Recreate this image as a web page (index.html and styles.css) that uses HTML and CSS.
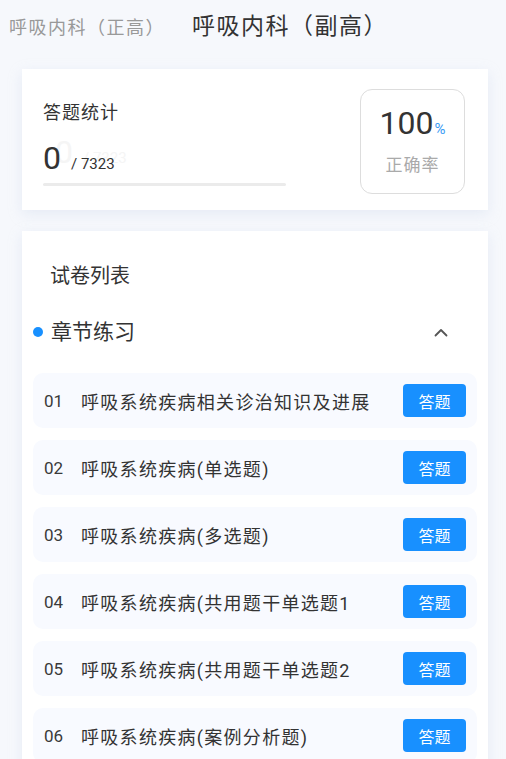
FILE: index.html
```html
<!DOCTYPE html>
<html lang="zh-CN">
<head>
    <meta charset="UTF-8">
    <meta name="viewport" content="width=device-width, initial-scale=1.0">
    <title>呼吸内科（副高）</title>
    <link rel="stylesheet" href="styles.css">
</head>
<body>
    <!-- Tabs -->
    <div class="tabs">
        <span class="tab">呼吸内科（正高）</span>
        <span class="tab tab-active">呼吸内科（副高）</span>
    </div>

    <!-- Stats card -->
    <div class="card stats-card">
        <div class="stats-left">
            <div class="stats-title">答题统计</div>
            <div class="stats-count">
                <span class="count-done">0</span>
                <span class="count-total">/ 7323</span>
            </div>
            <div class="progress"><div class="progress-fill" style="width: 0%"></div></div>
        </div>
        <div class="rate-box">
            <div class="rate-value">100<span class="rate-unit">%</span></div>
            <div class="rate-label">正确率</div>
        </div>
    </div>

    <!-- Paper list -->
    <div class="card list-card">
        <div class="list-title">试卷列表</div>
        <div class="group-head">
            <span class="group-dot"></span>
            <span class="group-name">章节练习</span>
            <svg class="group-arrow" width="14" height="9" viewBox="0 0 14 9">
                <path d="M1.5 7.5 L7 2 L12.5 7.5" fill="none" stroke="#555" stroke-width="1.8" stroke-linecap="round" stroke-linejoin="round"/>
            </svg>
        </div>

        <div class="paper">
            <span class="paper-no">01</span>
            <span class="paper-name">呼吸系统疾病相关诊治知识及进展</span>
            <button class="btn-answer">答题</button>
        </div>
        <div class="paper">
            <span class="paper-no">02</span>
            <span class="paper-name">呼吸系统疾病(单选题)</span>
            <button class="btn-answer">答题</button>
        </div>
        <div class="paper">
            <span class="paper-no">03</span>
            <span class="paper-name">呼吸系统疾病(多选题)</span>
            <button class="btn-answer">答题</button>
        </div>
        <div class="paper">
            <span class="paper-no">04</span>
            <span class="paper-name">呼吸系统疾病(共用题干单选题1</span>
            <button class="btn-answer">答题</button>
        </div>
        <div class="paper">
            <span class="paper-no">05</span>
            <span class="paper-name">呼吸系统疾病(共用题干单选题2</span>
            <button class="btn-answer">答题</button>
        </div>
        <div class="paper">
            <span class="paper-no">06</span>
            <span class="paper-name">呼吸系统疾病(案例分析题)</span>
            <button class="btn-answer">答题</button>
        </div>
    </div>
</body>
</html>
```

FILE: styles.css
```css
/* Base */
* {
    margin: 0;
    padding: 0;
    box-sizing: border-box;
}

body {
    width: 506px;
    height: 759px;
    overflow: hidden;
    font-family: Roboto, "Noto Sans CJK SC", "Noto Sans", sans-serif;
    background-color: #f6f8fc;
    color: #333333;
}

/* Tabs */
.tabs {
    height: 69px;
    display: flex;
    align-items: baseline;
    padding: 12px 0 0 9px;
}

.tab {
    font-size: 18px;
    color: #999999;
    line-height: 30px;
    letter-spacing: 1.5px;
    margin-right: 27px;
}

.tab-active {
    font-size: 23px;
    color: #333333;
    letter-spacing: 1.5px;
}

/* Cards */
.card {
    margin: 0 18px 0 22px;
    background-color: #ffffff;
    box-shadow: 0 4px 12px rgba(200, 212, 235, 0.35);
}

/* Stats card */
.stats-card {
    height: 141px;
    display: flex;
    justify-content: space-between;
    padding: 20px 23px 16px 21px;
}

.stats-left {
    width: 243px;
    padding-top: 12px;
}

.stats-title {
    font-size: 18px;
    line-height: 24px;
    letter-spacing: 1px;
    color: #333333;
}

.stats-count {
    margin-top: 14px;
    height: 38px;
    display: flex;
    align-items: baseline;
    text-shadow: 12px -6px 0 #f5f5f5;
}

.count-done {
    font-size: 32px;
    line-height: 38px;
    color: #333333;
    margin-right: 10px;
}

.count-total {
    font-size: 15px;
    color: #333333;
}

.progress {
    margin-top: 6px;
    height: 3px;
    border-radius: 2px;
    background-color: #ebebeb;
}

.progress-fill {
    height: 100%;
    background-color: #1890ff;
}

.rate-box {
    width: 105px;
    height: 105px;
    border: 1px solid #dddddd;
    border-radius: 12px;
    display: flex;
    flex-direction: column;
    align-items: center;
    padding-top: 12px;
}

.rate-value {
    font-size: 32px;
    line-height: 42px;
    color: #333333;
}

.rate-unit {
    font-size: 15px;
    color: #3a9cf5;
    margin-left: 1px;
}

.rate-label {
    font-size: 17px;
    line-height: 26px;
    color: #aaaaaa;
    letter-spacing: 1px;
    margin-top: 2px;
}

/* List card */
.list-card {
    margin-top: 21px;
    padding: 31px 11px 20px 11px;
}

.list-title {
    font-size: 20px;
    line-height: 28px;
    padding-left: 17px;
    color: #333333;
}

.group-head {
    margin-top: 27px;
    height: 30px;
    display: flex;
    align-items: center;
}

.group-dot {
    width: 10px;
    height: 10px;
    border-radius: 50%;
    background-color: #1890ff;
    margin-right: 8px;
}

.group-name {
    flex: 1;
    font-size: 21px;
    line-height: 30px;
    color: #333333;
}

.group-arrow {
    margin-right: 29px;
}

.paper {
    margin-top: 26px;
    height: 55px;
    border-radius: 10px;
    background-color: #f8faff;
    display: flex;
    align-items: center;
    padding: 0 11px;
}

.paper + .paper {
    margin-top: 12px;
}

.paper-no {
    width: 37px;
    font-size: 17px;
    color: #3a3a3a;
}

.paper-name {
    flex: 1;
    font-size: 18px;
    letter-spacing: 1.3px;
    color: #333333;
    white-space: nowrap;
    overflow: hidden;
}

.btn-answer {
    width: 63px;
    height: 33px;
    border: none;
    border-radius: 4px;
    background-color: #1890ff;
    color: #ffffff;
    font-family: inherit;
    font-size: 16px;
    cursor: pointer;
}
```
